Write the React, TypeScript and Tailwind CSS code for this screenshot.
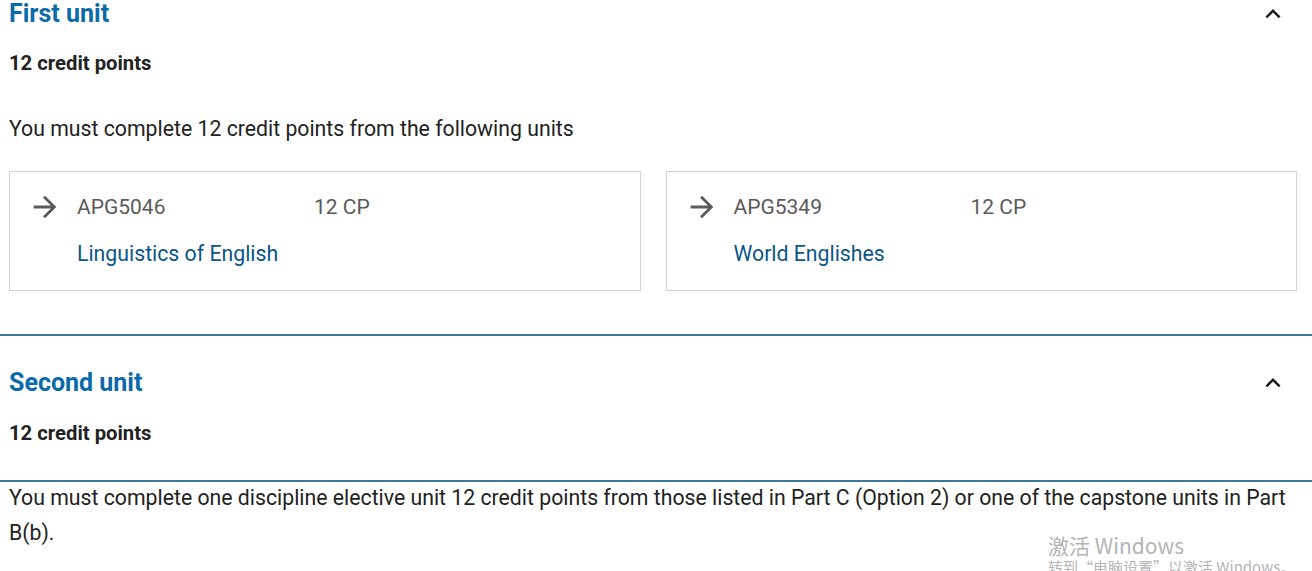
import { MdArrowForward, MdExpandLess } from "react-icons/md";

type Unit = { code: string; cp: string; title: string };

const firstUnits: Unit[] = [
  { code: "APG5046", cp: "12 CP", title: "Linguistics of English" },
  { code: "APG5349", cp: "12 CP", title: "World Englishes" },
];

function SectionHeader({ title }: { title: string }) {
  return (
    <div className="flex h-[28px] items-center justify-between pr-[24px]">
      <h2 className="text-[25px] font-bold leading-[28px] text-[#0b6aa8]">{title}</h2>
      <MdExpandLess className="h-[30px] w-[30px] text-[#1a1a1a]" />
    </div>
  );
}

function UnitCard({ unit }: { unit: Unit }) {
  return (
    <div className="h-[120px] border border-[#d3d3d3] bg-white pl-[18px] pt-[18px]">
      <div className="flex h-[34px] items-center">
        <MdArrowForward className="h-[34px] w-[34px] shrink-0 text-[#5a5a5a]" />
        <span className="ml-[15px] w-[237px] text-[21px] leading-[24px] text-[#5a5a5a]">{unit.code}</span>
        <span className="text-[21px] leading-[24px] text-[#5a5a5a]">{unit.cp}</span>
      </div>
      <a className="ml-[49px] mt-[18px] block text-[21.25px] leading-[24px] text-[#0a5688]">{unit.title}</a>
    </div>
  );
}

export default function App() {
  return (
    <div className="relative h-[571px] overflow-hidden bg-white font-['Roboto',sans-serif] text-[#222]">
      {/* First unit */}
      <section className="pl-[9px]">
        <SectionHeader title="First unit" />
        <p className="mt-[23px] text-[20.25px] font-bold leading-[24px] text-[#222]">12 credit points</p>
        <p className="mt-[42px] text-[21.25px] leading-[24px] text-[#222]">
          You must complete 12 credit points from the following units
        </p>
        <div className="mt-[30px] grid grid-cols-2 gap-[25px] pr-[15px]">
          {firstUnits.map((u) => (
            <UnitCard key={u.code} unit={u} />
          ))}
        </div>
      </section>

      <div className="mt-[43px] h-[2px] bg-[#3b7a9a]" />

      {/* Second unit */}
      <section className="pl-[9px]">
        <div className="mt-[33px]">
          <SectionHeader title="Second unit" />
        </div>
        <p className="mt-[24px] text-[20.25px] font-bold leading-[24px] text-[#222]">12 credit points</p>
      </section>

      <div className="mt-[35px] h-[2px] bg-[#3b7a9a]" />

      <p className="-mt-[2px] pl-[9px] pr-[20px] text-[21.25px] leading-[35px] text-[#222]">
        You must complete one discipline elective unit 12 credit points from those listed in Part C (Option 2) or one of the capstone units in Part B(b).
      </p>

      {/* Windows activation watermark */}
      <div className="pointer-events-none absolute left-[1048px] top-[533px] font-['Noto_Sans_CJK_SC','Roboto',sans-serif] text-[#b4b4b4]">
        <div className="text-[21px] leading-[24px]">激活 Windows</div>
        <div className="text-[15px] leading-[20px]">转到“电脑设置”以激活 Windows。</div>
      </div>
    </div>
  );
}
